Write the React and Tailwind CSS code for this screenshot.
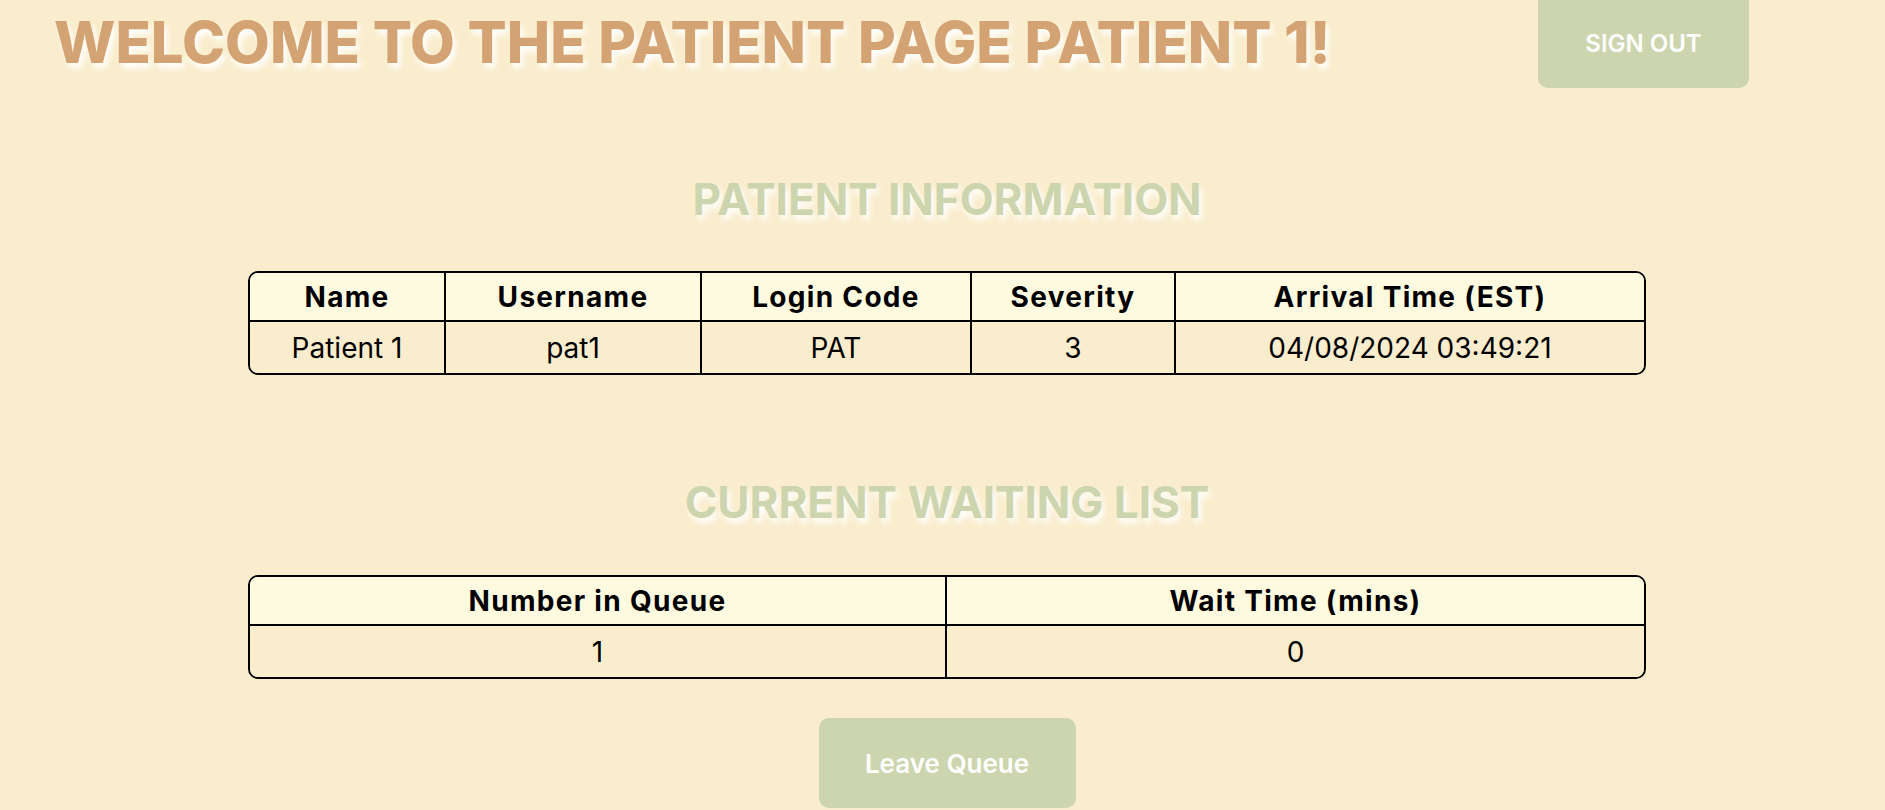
import React from 'react';

const font = { fontFamily: 'Inter, "Noto Sans", sans-serif' };

const patientCols = [
  { label: 'Name', value: 'Patient 1' },
  { label: 'Username', value: 'pat1' },
  { label: 'Login Code', value: 'PAT' },
  { label: 'Severity', value: '3' },
  { label: 'Arrival Time (EST)', value: '04/08/2024 03:49:21' },
];

const queueCols = [
  { label: 'Number in Queue', value: '1' },
  { label: 'Wait Time (mins)', value: '0' },
];

const InfoTable = ({ cols, gridClass }) => (
  <div className={`grid ${gridClass} w-[1398px] border-2 border-black rounded-[10px] overflow-hidden`}>
    {cols.map((c, i) => (
      <div
        key={'h' + i}
        className={`h-[49px] flex items-center justify-center bg-[#fefae0] border-b-2 border-black text-[28px] font-bold tracking-[1.3px] text-black ${
          i < cols.length - 1 ? 'border-r-2' : ''
        }`}
      >
        {c.label}
      </div>
    ))}
    {cols.map((c, i) => (
      <div
        key={'v' + i}
        className={`h-[51px] flex items-center justify-center bg-[#faedcd] border-black text-[28px] text-black ${
          i < cols.length - 1 ? 'border-r-2' : ''
        }`}
      >
        {c.value}
      </div>
    ))}
  </div>
);

const App = () => {
  return (
    <div className="min-h-screen w-full bg-[#faedcd] overflow-hidden" style={font}>
      {/* Header */}
      <div className="flex items-start">
        <h1 className="pl-[54px] pt-[13px] text-[58px] leading-[58px] font-extrabold text-[#d4a373] [text-shadow:3px_5px_6px_#ffffff]">
          WELCOME TO THE PATIENT PAGE PATIENT 1!
        </h1>
        <button className="ml-auto mr-[136px] w-[211px] h-[88px] rounded-b-[10px] bg-[#ccd5ae] text-white text-[24px] font-semibold">
          SIGN OUT
        </button>
      </div>

      <div className="flex flex-col items-center pl-[9px]">
        <h2 className="mt-[86px] text-[44px] leading-[50px] font-bold text-[#ccd5ae] [text-shadow:3px_5px_6px_#ffffff]">
          PATIENT INFORMATION
        </h2>
        <div className="mt-[47px]">
          <InfoTable cols={patientCols} gridClass="grid-cols-[196px_256px_270px_204px_1fr]" />
        </div>

        <h2 className="mt-[102px] text-[44px] leading-[50px] font-bold text-[#ccd5ae] [text-shadow:3px_5px_6px_#ffffff]">
          CURRENT WAITING LIST
        </h2>
        <div className="mt-[48px]">
          <InfoTable cols={queueCols} gridClass="grid-cols-2" />
        </div>

        <button className="mt-[39px] w-[257px] h-[90px] rounded-[10px] bg-[#ccd5ae] text-white text-[26px] font-semibold">
          Leave Queue
        </button>
      </div>
    </div>
  );
};

export default App;
